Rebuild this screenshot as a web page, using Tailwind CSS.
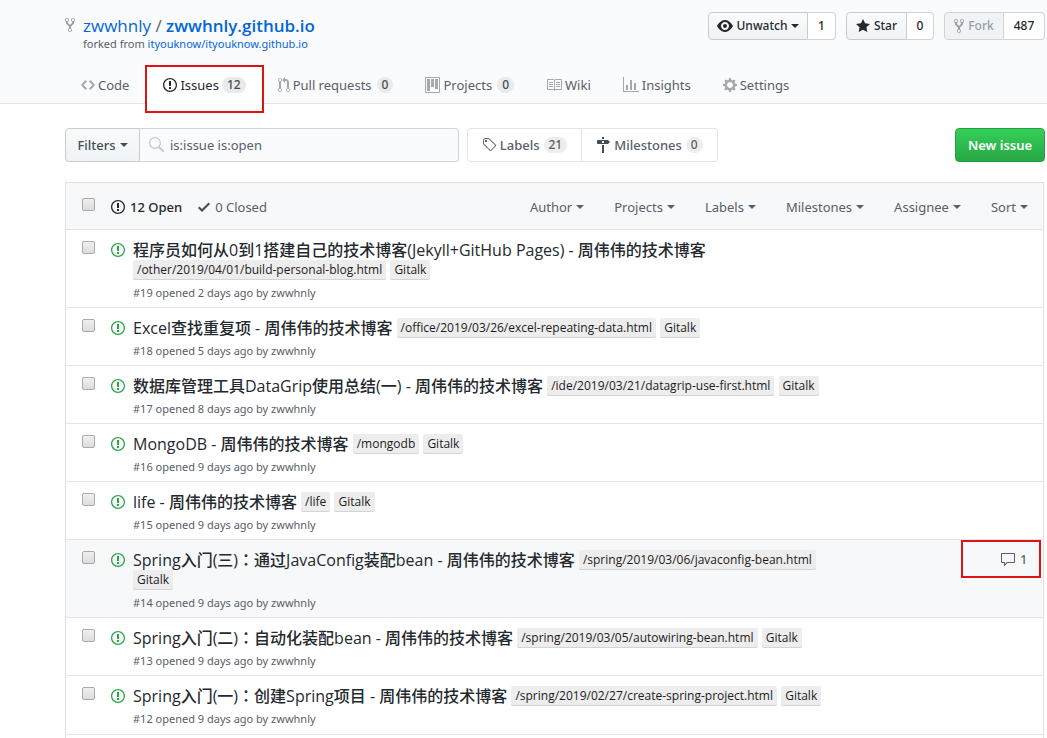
<!DOCTYPE html>
<html lang="en">
<head>
<meta charset="utf-8">
<meta name="viewport" content="width=device-width, initial-scale=1">
<title>Issues · zwwhnly/zwwhnly.github.io</title>
<script src="https://cdn.jsdelivr.net/npm/@tailwindcss/browser@4"></script>
</head>
<body class="min-h-screen overflow-x-hidden bg-white font-['Noto_Sans','Noto_Sans_CJK_SC',sans-serif] text-sm text-[#24292e]">

<svg class="hidden" aria-hidden="true">
  <symbol id="fork" viewBox="0 0 10 16"><path fill-rule="evenodd" d="M8 1a1.993 1.993 0 0 0-1 3.72V6L5 8 3 6V4.72A1.993 1.993 0 0 0 2 1a1.993 1.993 0 0 0-1 3.72V6.5l3 3v1.78A1.993 1.993 0 0 0 5 15a1.993 1.993 0 0 0 1-3.72V9.5l3-3V4.72A1.993 1.993 0 0 0 8 1zM2 4.2C1.34 4.2.8 3.65.8 3c0-.65.55-1.2 1.2-1.2.65 0 1.2.55 1.2 1.2 0 .65-.55 1.2-1.2 1.2zm3 10c-.66 0-1.2-.55-1.2-1.2 0-.65.55-1.2 1.2-1.2.65 0 1.2.55 1.2 1.2 0 .65-.55 1.2-1.2 1.2zm3-10c-.66 0-1.2-.55-1.2-1.2 0-.65.55-1.2 1.2-1.2.65 0 1.2.55 1.2 1.2 0 .65-.55 1.2-1.2 1.2z"/></symbol>
  <symbol id="issue" viewBox="0 0 14 16"><path fill-rule="evenodd" d="M7 2.3c3.14 0 5.7 2.56 5.7 5.7s-2.56 5.7-5.7 5.7A5.71 5.71 0 0 1 1.3 8c0-3.14 2.56-5.7 5.7-5.7zM7 1C3.14 1 0 4.14 0 8s3.14 7 7 7 7-3.14 7-7-3.14-7-7-7zm1 3H6v5h2V4zm0 6H6v2h2v-2z"/></symbol>
  <symbol id="code" viewBox="0 0 14 16"><path fill-rule="evenodd" d="M9.5 3L8 4.5 11.5 8 8 11.5 9.5 13 14 8 9.5 3zm-5 0L0 8l4.5 5L6 11.5 2.5 8 6 4.5 4.5 3z"/></symbol>
  <symbol id="pull" viewBox="0 0 12 16"><path fill-rule="evenodd" d="M11 11.28V5c-.03-.78-.34-1.47-.94-2.06C9.46 2.35 8.78 2.03 8 2H7V0L4 3l3 3V4h1c.27.02.48.11.69.31.21.2.3.42.31.69v6.28A1.993 1.993 0 0 0 10 15a1.993 1.993 0 0 0 1-3.72zm-1 2.92c-.66 0-1.2-.55-1.2-1.2 0-.65.55-1.2 1.2-1.2.65 0 1.2.55 1.2 1.2 0 .65-.55 1.2-1.2 1.2zM4 3c0-1.11-.89-2-2-2a1.993 1.993 0 0 0-1 3.72v6.56A1.993 1.993 0 0 0 2 15a1.993 1.993 0 0 0 1-3.72V4.72c.59-.34 1-.98 1-1.72zm-.8 10c0 .66-.55 1.2-1.2 1.2-.65 0-1.2-.55-1.2-1.2 0-.65.55-1.2 1.2-1.2.65 0 1.2.55 1.2 1.2zM2 4.2C1.34 4.2.8 3.65.8 3c0-.65.55-1.2 1.2-1.2.65 0 1.2.55 1.2 1.2 0 .65-.55 1.2-1.2 1.2z"/></symbol>
  <symbol id="project" viewBox="0 0 15 16"><path fill-rule="evenodd" d="M10 12h3V2h-3v10zm-4-2h3V2H6v8zm-4 4h3V2H2v12zm-1 1h13V1H1v14zM14 0H1a1 1 0 0 0-1 1v14a1 1 0 0 0 1 1h13a1 1 0 0 0 1-1V1a1 1 0 0 0-1-1z"/></symbol>
  <symbol id="book" viewBox="0 0 16 16"><path fill-rule="evenodd" d="M3 5h4v1H3V5zm0 3h4V7H3v1zm0 2h4V9H3v1zm11-5h-4v1h4V5zm0 2h-4v1h4V7zm0 2h-4v1h4V9zm2-6v9c0 .55-.45 1-1 1H9.5l-1 1-1-1H2c-.55 0-1-.45-1-1V3c0-.55.45-1 1-1h5.5l1 1 1-1H15c.55 0 1 .45 1 1zm-8 .5L7.5 3H2v9h6V3.5zm7-.5H9.5l-.5.5V12h6V3z"/></symbol>
  <symbol id="graph" viewBox="0 0 16 16"><path fill-rule="evenodd" d="M16 14v1H0V0h1v14h15zM5 13H3V8h2v5zm4 0H7V3h2v10zm4 0h-2V6h2v7z"/></symbol>
  <symbol id="gear" viewBox="0 0 14 16"><path fill-rule="evenodd" d="M14 8.77v-1.6l-1.94-.64-.45-1.09.88-1.84-1.13-1.13-1.81.91-1.09-.45-.69-1.92h-1.6l-.63 1.94-1.11.45-1.84-.88-1.13 1.13.91 1.81-.45 1.09L0 7.23v1.59l1.94.64.45 1.09-.88 1.84 1.13 1.13 1.81-.91 1.09.45.69 1.92h1.59l.63-1.94 1.11-.45 1.84.88 1.13-1.13-.92-1.81.47-1.09L14 8.75v.02zM7 11c-1.66 0-3-1.34-3-3s1.34-3 3-3 3 1.34 3 3-1.34 3-3 3z"/></symbol>
  <symbol id="eye" viewBox="0 0 16 16"><path fill-rule="evenodd" d="M8.06 2C3 2 0 8 0 8s3 6 8.06 6C13 14 16 8 16 8s-3-6-7.94-6zM8 12c-2.2 0-4-1.78-4-4 0-2.2 1.8-4 4-4 2.22 0 4 1.8 4 4 0 2.22-1.78 4-4 4zm2-4c0 1.11-.89 2-2 2-1.11 0-2-.89-2-2 0-1.11.89-2 2-2 1.11 0 2 .89 2 2z"/></symbol>
  <symbol id="star" viewBox="0 0 14 16"><path d="M14 6l-4.9-.64L7 1 4.9 5.36 0 6l3.6 3.26L2.67 14 7 11.67 11.33 14l-.93-4.74L14 6z"/></symbol>
  <symbol id="search" viewBox="0 0 16 16"><path fill-rule="evenodd" d="M15.7 13.3l-3.81-3.83A5.93 5.93 0 0 0 13 6c0-3.31-2.69-6-6-6S1 2.69 1 6s2.69 6 6 6c1.3 0 2.48-.41 3.47-1.11l3.83 3.81c.19.2.45.3.7.3.25 0 .52-.09.7-.3a.996.996 0 0 0 0-1.41v.01zM7 10.7c-2.59 0-4.7-2.11-4.7-4.7 0-2.59 2.11-4.7 4.7-4.7 2.59 0 4.7 2.11 4.7 4.7 0 2.59-2.11 4.7-4.7 4.7z"/></symbol>
  <symbol id="tag" viewBox="0 0 14 16"><path fill-rule="evenodd" d="M7.73 1.73C7.26 1.26 6.62 1 5.96 1H3.5C2.13 1 1 2.13 1 3.5v2.47c0 .66.27 1.3.73 1.77l6.06 6.06c.39.39 1.02.39 1.41 0l4.59-4.59a.996.996 0 0 0 0-1.41L7.73 1.73zM2.38 7.09c-.31-.3-.47-.7-.47-1.13V3.5c0-.88.72-1.59 1.59-1.59h2.47c.42 0 .83.16 1.13.47l6.14 6.13-4.73 4.73-6.13-6.15zM3.01 3h2v2H3V3h.01z"/></symbol>
  <symbol id="milestone" viewBox="0 0 14 16"><path fill-rule="evenodd" d="M8 2H6V0h2v2zm4 5H2c-.55 0-1-.45-1-1V4c0-.55.45-1 1-1h10l2 2-2 2zM8 4H6v2h2V4zM6 16h2V8H6v8z"/></symbol>
  <symbol id="check" viewBox="0 0 12 16"><path d="M12 5l-8 8-4-4 1.5-1.5L4 10l6.5-6.5L12 5z"/></symbol>
  <symbol id="comment" viewBox="0 0 16 16"><path fill-rule="evenodd" d="M14 1H2c-.55 0-1 .45-1 1v8c0 .55.45 1 1 1h2v3.5L7.5 11H14c.55 0 1-.45 1-1V2c0-.55-.45-1-1-1zm0 9H7l-2 2v-2H2V2h12v8z"/></symbol>
  <symbol id="caret" viewBox="0 0 8 4"><path d="M0 0h8L4 4z"/></symbol>
</svg>

<header class="border-b border-[#e1e4e8] bg-[#fafbfc] pr-[2px] pl-[65px]">
  <div class="flex items-start justify-between pt-3">
    <div class="flex gap-2 pt-1">
      <svg class="mt-px h-4 w-[10px] fill-[#999da1]"><use href="#fork"/></svg>
      <div>
        <h1 class="font-['Open_Sans',sans-serif] text-[17px] leading-5"><a href="#" class="text-[#0366d6]">zwwhnly</a> <span class="text-[#586069]">/</span> <a href="#" class="font-semibold text-[#0366d6]">zwwhnly.github.io</a></h1>
        <p class="text-[11px] leading-4 text-[#586069]">forked from <a href="#" class="text-[#0366d6]">ityouknow/ityouknow.github.io</a></p>
      </div>
    </div>
    <div class="flex gap-[10px] text-xs leading-5">
      <div class="flex h-7">
        <button class="flex w-[100px] items-center justify-center gap-1 rounded-l border border-[#c9cccf] bg-linear-to-b from-[#fafbfc] to-[#eff3f6] font-medium"><svg class="h-4 w-4 fill-[#24292e]"><use href="#eye"/></svg>Unwatch<svg class="h-1 w-2 fill-[#24292e]"><use href="#caret"/></svg></button>
        <a href="#" class="flex w-7 items-center justify-center rounded-r border border-l-0 border-[#d1d4d7] bg-white font-medium">1</a>
      </div>
      <div class="flex h-7">
        <button class="flex w-[61px] items-center justify-center gap-1 rounded-l border border-[#c9cccf] bg-linear-to-b from-[#fafbfc] to-[#eff3f6] font-medium"><svg class="h-4 w-[14px] fill-[#24292e]"><use href="#star"/></svg>Star</button>
        <a href="#" class="flex w-[27px] items-center justify-center rounded-r border border-l-0 border-[#d1d4d7] bg-white font-medium">0</a>
      </div>
      <div class="flex h-7">
        <button class="flex w-[60px] items-center justify-center gap-1 rounded-l border border-[#d1d4d7] bg-[#eff3f6] font-medium text-[#959da5]" disabled><svg class="h-4 w-[10px] fill-[#959da5]"><use href="#fork"/></svg>Fork</button>
        <a href="#" class="flex w-[41px] items-center justify-center rounded-r border border-l-0 border-[#d1d4d7] bg-white font-medium">487</a>
      </div>
    </div>
  </div>

  <nav class="-mb-px flex pt-[14px] text-[13px] whitespace-nowrap text-[#586069]">
    <a href="#" class="flex h-[38px] items-center gap-[3px] pr-[18px] pl-4"><svg class="h-4 w-[14px] fill-[#a3a8ad]"><use href="#code"/></svg>Code</a>
    <a href="#" class="relative flex h-[38px] items-center gap-[3px] bg-white px-4 text-[#24292e]"><svg class="h-4 w-[14px] fill-[#24292e]"><use href="#issue"/></svg>Issues<span class="rounded-full bg-[#e9eaec] px-[5px] text-xs leading-4 font-medium text-[#444d56]">12</span>
      <span class="absolute -inset-x-[2px] -top-px h-12 border-2 border-[#dc1414]"></span>
    </a>
    <a href="#" class="flex h-[38px] items-center gap-[3px] px-4"><svg class="h-4 w-3 fill-[#a3a8ad]"><use href="#pull"/></svg>Pull requests<span class="ml-[2px] rounded-full bg-[#e9eaec] px-[5px] text-xs leading-4 font-medium text-[#444d56]">0</span></a>
    <a href="#" class="flex h-[38px] items-center gap-[3px] px-4"><svg class="h-4 w-[15px] fill-[#a3a8ad]"><use href="#project"/></svg>Projects<span class="ml-[2px] rounded-full bg-[#e9eaec] px-[5px] text-xs leading-4 font-medium text-[#444d56]">0</span></a>
    <a href="#" class="flex h-[38px] items-center gap-[3px] px-4"><svg class="h-4 w-4 fill-[#a3a8ad]"><use href="#book"/></svg>Wiki</a>
    <a href="#" class="flex h-[38px] items-center gap-[3px] px-4"><svg class="h-4 w-4 fill-[#a3a8ad]"><use href="#graph"/></svg>Insights</a>
    <a href="#" class="flex h-[38px] items-center gap-[3px] px-4"><svg class="h-4 w-[14px] fill-[#a3a8ad]"><use href="#gear"/></svg>Settings</a>
  </nav>
</header>

<main class="pt-6 pr-[2px] pl-[65px]">
  <div class="flex h-[34px] text-[13px]">
    <button class="flex w-[75px] items-center justify-center gap-1 rounded-l border border-[#c9cccf] bg-linear-to-b from-[#fafbfc] to-[#eff3f6] font-medium text-[#444d56]">Filters<svg class="h-1 w-2 fill-[#444d56]"><use href="#caret"/></svg></button>
    <label class="flex w-[319px] items-center gap-[6px] rounded-r border border-l-0 border-[#d1d5da] bg-[#fafbfc] pl-2">
      <svg class="h-4 w-4 fill-[#c6cbd1]"><use href="#search"/></svg>
      <input type="text" aria-label="Search all issues" value="is:issue is:open" class="min-w-0 flex-1 bg-transparent text-[#586069] outline-none">
    </label>
    <div class="ml-2 flex font-medium text-[#586069]">
      <a href="#" class="flex w-[115px] items-center justify-center gap-1 rounded-l border border-[#e1e4e8]"><svg class="h-4 w-[14px] fill-[#586069]"><use href="#tag"/></svg>Labels<span class="rounded-full bg-[#eceded] px-[5px] text-xs leading-4">21</span></a>
      <a href="#" class="flex w-[136px] items-center justify-center gap-1 rounded-r border border-l-0 border-[#e1e4e8]"><svg class="h-4 w-[14px] fill-[#444d56]"><use href="#milestone"/></svg>Milestones<span class="rounded-full bg-[#eceded] px-[5px] text-xs leading-4">0</span></a>
    </div>
    <button class="ml-auto w-[90px] rounded border border-[#269f42] bg-linear-to-b from-[#34d058] to-[#28a745] font-semibold text-white">New issue</button>
  </div>

  <section class="mt-5 mr-px border-x border-t border-[#dfe2e5]">
    <div class="flex items-start border-b border-[#e1e4e8] bg-[#f6f8fa] pt-[15px] pr-[15px] pb-[13px] pl-4 text-[13px] leading-[18px] text-[#586069]">
      <input type="checkbox" aria-label="Select all issues" class="h-[13px] w-[13px] appearance-none rounded-[2px] border border-[#a9a9a9] bg-linear-to-b from-[#f0f0f0] to-[#dcdcdc]">
      <a href="#" class="ml-4 flex items-center gap-[5px] font-medium text-[#24292e]"><svg class="h-4 w-[14px] fill-[#24292e]"><use href="#issue"/></svg>12 Open</a>
      <a href="#" class="ml-4 flex items-center gap-[5px]"><svg class="h-4 w-3 fill-[#444d56]"><use href="#check"/></svg>0 Closed</a>
      <div class="ml-auto flex gap-[30px]">
        <button class="flex items-center gap-1">Author<svg class="h-1 w-2 fill-[#586069]"><use href="#caret"/></svg></button>
        <button class="flex items-center gap-1">Projects<svg class="h-1 w-2 fill-[#586069]"><use href="#caret"/></svg></button>
        <button class="flex items-center gap-1">Labels<svg class="h-1 w-2 fill-[#586069]"><use href="#caret"/></svg></button>
        <button class="flex items-center gap-1">Milestones<svg class="h-1 w-2 fill-[#586069]"><use href="#caret"/></svg></button>
        <button class="flex items-center gap-1">Assignee<svg class="h-1 w-2 fill-[#586069]"><use href="#caret"/></svg></button>
        <button class="flex items-center gap-1">Sort<svg class="h-1 w-2 fill-[#586069]"><use href="#caret"/></svg></button>
      </div>
    </div>
    <ul id="issues" class="divide-y divide-[#e1e4e8] border-b border-[#e1e4e8] pb-px"></ul>
    <div class="h-[3px]"></div>
  </section>
</main>

<template id="row">
  <li class="flex items-start pr-4 pb-[5px] pl-4">
    <input type="checkbox" class="mt-[11px] h-[13px] w-[13px] shrink-0 appearance-none rounded-[2px] border border-[#a9a9a9] bg-linear-to-b from-[#f0f0f0] to-[#dcdcdc]">
    <svg class="mt-3 ml-4 h-4 w-[14px] shrink-0 fill-[#28a745]" role="img" aria-label="Open issue"><use href="#issue"/></svg>
    <div class="ml-2 w-[710px] pt-[10px]">
      <h2 class="font-['Open_Sans','Noto_Sans_CJK_SC',sans-serif] text-base leading-5"><a href="#" class="font-medium"></a></h2>
      <p class="mt-1 text-[11px] leading-[18px] text-[#586069]"></p>
    </div>
  </li>
</template>
<template id="label"><a href="#" class="inline-block rounded-[2px] bg-[#ededed] px-1 align-top text-xs leading-5 font-medium whitespace-nowrap text-[#1c1c1c] shadow-[inset_0_-1px_0_rgba(27,31,35,0.12)]"></a></template>
<template id="comments"><a href="#" class="relative mt-3 ml-auto flex items-center gap-1 text-xs leading-4 font-medium text-[#586069]"><svg class="h-4 w-4 fill-[#586069]"><use href="#comment"/></svg><span></span><span class="absolute -top-3 -right-[14px] h-[38px] w-20 border-2 border-[#dc1414]"></span></a></template>

<script>
const issues = [
  [19, 2, '程序员如何从0到1搭建自己的技术博客(Jekyll+GitHub Pages) - 周伟伟的技术博客', '/other/2019/04/01/build-personal-blog.html'],
  [18, 5, 'Excel查找重复项 - 周伟伟的技术博客', '/office/2019/03/26/excel-repeating-data.html'],
  [17, 8, '数据库管理工具DataGrip使用总结(一) - 周伟伟的技术博客', '/ide/2019/03/21/datagrip-use-first.html'],
  [16, 9, 'MongoDB - 周伟伟的技术博客', '/mongodb'],
  [15, 9, 'life - 周伟伟的技术博客', '/life'],
  [14, 9, 'Spring入门(三)：通过JavaConfig装配bean - 周伟伟的技术博客', '/spring/2019/03/06/javaconfig-bean.html', 1],
  [13, 9, 'Spring入门(二)：自动化装配bean - 周伟伟的技术博客', '/spring/2019/03/05/autowiring-bean.html'],
  [12, 9, 'Spring入门(一)：创建Spring项目 - 周伟伟的技术博客', '/spring/2019/02/27/create-spring-project.html'],
];
const clone = id => document.getElementById(id).content.firstElementChild.cloneNode(true);
for (const [number, days, title, path, comments] of issues) {
  const li = clone('row');
  li.querySelector('input').setAttribute('aria-label', 'Select issue ' + number);
  const h2 = li.querySelector('h2');
  h2.firstElementChild.innerHTML = title.replace('：', '<span lang="zh-TW" class="font-[\'Noto_Sans_CJK_TC\',sans-serif] leading-none">：</span>');
  for (const name of [path, 'Gitalk']) {
    const label = clone('label');
    label.textContent = name;
    h2.append(' ', label);
  }
  li.querySelector('p').textContent = `#${number} opened ${days} days ago by zwwhnly`;
  if (comments) {
    li.classList.add('bg-[#f6f8fa]');
    const c = clone('comments');
    c.querySelector('span').textContent = comments;
    li.append(c);
  }
  document.getElementById('issues').append(li);
}
</script>
</body>
</html>
